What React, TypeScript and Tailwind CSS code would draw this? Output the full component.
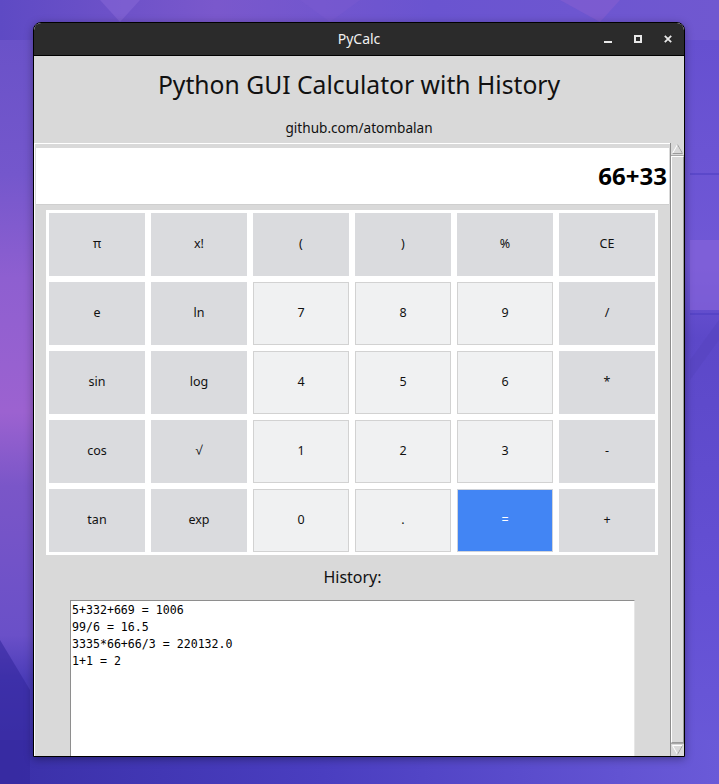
import React from "react";

const Wallpaper = () => (
  <svg className="absolute inset-0" width="719" height="784" viewBox="0 0 719 784">
    <defs>
      <linearGradient id="lg" x1="0" y1="0" x2="0" y2="1">
        <stop offset="0" stopColor="#6a52c8" />
        <stop offset="0.18" stopColor="#7457cc" />
        <stop offset="0.32" stopColor="#8e5fd0" />
        <stop offset="0.5" stopColor="#9c62d0" />
        <stop offset="0.6" stopColor="#7a56c8" />
        <stop offset="0.8" stopColor="#6a50c8" />
        <stop offset="0.86" stopColor="#4a3cb8" />
        <stop offset="1" stopColor="#3a30a8" />
      </linearGradient>
      <linearGradient id="rg" x1="0" y1="0" x2="0" y2="1">
        <stop offset="0" stopColor="#6650d0" />
        <stop offset="0.3" stopColor="#7058d6" />
        <stop offset="0.4" stopColor="#5c48c8" />
        <stop offset="0.75" stopColor="#6450d4" />
        <stop offset="1" stopColor="#6a5ad8" />
      </linearGradient>
      <linearGradient id="bg" x1="0" y1="0" x2="1" y2="0">
        <stop offset="0" stopColor="#3a30a8" />
        <stop offset="0.45" stopColor="#4a3ec0" />
        <stop offset="1" stopColor="#6a5ad8" />
      </linearGradient>
      <linearGradient id="tg" x1="0" y1="0" x2="1" y2="0">
        <stop offset="0" stopColor="#5e4ac4" />
        <stop offset="0.3" stopColor="#7a58cc" />
        <stop offset="0.6" stopColor="#6a54d0" />
        <stop offset="1" stopColor="#7058d0" />
      </linearGradient>
    </defs>
    <rect x="0" y="0" width="719" height="784" fill="url(#tg)" />
    <rect x="0" y="40" width="60" height="744" fill="url(#lg)" />
    <rect x="660" y="40" width="59" height="744" fill="url(#rg)" />
    <rect x="0" y="740" width="719" height="44" fill="url(#bg)" />
    <polygon points="690,240 719,240 719,310 690,310" fill="#8462d8" opacity="0.7" />
    <polygon points="690,360 719,320 719,340 690,380" fill="#5644c0" opacity="0.6" />
    <line x1="690" y1="174" x2="719" y2="174" stroke="#4a3cc0" strokeWidth="1" />
    <line x1="690" y1="314" x2="719" y2="314" stroke="#4a3cc0" strokeWidth="1" />
    <polygon points="0,640 30,690 30,784 0,784" fill="#35289e" opacity="0.6" />
    <polygon points="100,0 140,0 120,22" fill="#8a6ad8" opacity="0.5" />
    <polygon points="300,0 360,0 330,22" fill="#7a5ad0" opacity="0.5" />
    <polygon points="560,0 620,0 600,22" fill="#8a60d0" opacity="0.5" />
  </svg>
);

const TitleBar = () => (
  <div className="relative h-[33px] bg-[#2b2b2b] border-b border-black flex items-center justify-center rounded-t-[7px]">
    <span className="text-[14px] text-[#f0f0f0] leading-none" style={{ fontFamily: '"Noto Sans", sans-serif' }}>
      PyCalc
    </span>
    <div className="absolute right-[12px] top-0 h-full flex items-center gap-[22px]">
      <svg width="8" height="8" viewBox="0 0 8 8">
        <rect x="0" y="6" width="8" height="2" fill="#e8e8e8" />
      </svg>
      <svg width="8" height="8" viewBox="0 0 8 8">
        <rect x="1" y="1" width="6" height="6" fill="none" stroke="#e8e8e8" strokeWidth="2" />
      </svg>
      <svg width="8" height="8" viewBox="0 0 8 8">
        <path d="M0.8 0.8 L7.2 7.2 M7.2 0.8 L0.8 7.2" stroke="#e8e8e8" strokeWidth="1.8" />
      </svg>
    </div>
  </div>
);

type Btn = { label: string; kind: "fn" | "num" | "eq" };

const rows: Btn[][] = [
  [
    { label: "π", kind: "fn" },
    { label: "x!", kind: "fn" },
    { label: "(", kind: "fn" },
    { label: ")", kind: "fn" },
    { label: "%", kind: "fn" },
    { label: "CE", kind: "fn" },
  ],
  [
    { label: "e", kind: "fn" },
    { label: "ln", kind: "fn" },
    { label: "7", kind: "num" },
    { label: "8", kind: "num" },
    { label: "9", kind: "num" },
    { label: "/", kind: "fn" },
  ],
  [
    { label: "sin", kind: "fn" },
    { label: "log", kind: "fn" },
    { label: "4", kind: "num" },
    { label: "5", kind: "num" },
    { label: "6", kind: "num" },
    { label: "*", kind: "fn" },
  ],
  [
    { label: "cos", kind: "fn" },
    { label: "√", kind: "fn" },
    { label: "1", kind: "num" },
    { label: "2", kind: "num" },
    { label: "3", kind: "num" },
    { label: "-", kind: "fn" },
  ],
  [
    { label: "tan", kind: "fn" },
    { label: "exp", kind: "fn" },
    { label: "0", kind: "num" },
    { label: ".", kind: "num" },
    { label: "=", kind: "eq" },
    { label: "+", kind: "fn" },
  ],
];

const btnClass: Record<Btn["kind"], string> = {
  fn: "bg-[#dadbde] border border-[#dadbde] text-[#111]",
  num: "bg-[#f0f1f2] border border-[#d2d2d2] text-[#111]",
  eq: "bg-[#4285f4] border border-[#cfd3da] text-white",
};

const Scrollbar = () => (
  <div className="w-[14px] flex flex-col bg-[#d9d9d9] border-l border-[#8c8c8c]">
    <div className="h-[13px] flex items-center justify-center border-b border-[#a8a8a8]">
      <svg width="11" height="10" viewBox="0 0 11 10">
        <polygon points="5.5,0.5 10.5,9.5 0.5,9.5" fill="#d9d9d9" stroke="#ffffff" strokeWidth="1" />
        <line x1="10.5" y1="9.5" x2="0.5" y2="9.5" stroke="#9a9a9a" />
        <line x1="5.5" y1="0.5" x2="10.5" y2="9.5" stroke="#9a9a9a" />
      </svg>
    </div>
    <div className="flex-1 border-l border-t border-white border-r-[1px] border-r-[#9a9a9a] border-b border-b-[#9a9a9a] bg-[#d9d9d9]" />
    <div className="h-[13px] flex items-center justify-center border-t border-[#a8a8a8]">
      <svg width="11" height="10" viewBox="0 0 11 10">
        <polygon points="0.5,0.5 10.5,0.5 5.5,9.5" fill="#d9d9d9" stroke="#ffffff" strokeWidth="1" />
        <line x1="10.5" y1="0.5" x2="5.5" y2="9.5" stroke="#9a9a9a" />
      </svg>
    </div>
  </div>
);

export default function App() {
  const sans = { fontFamily: '"Noto Sans", "Open Sans", sans-serif' };
  return (
    <div className="relative w-[719px] h-[784px] overflow-hidden bg-[#6a52c8]">
      <Wallpaper />
      <div className="relative pt-[22px] pl-[33px]">
        <div className="w-[652px] h-[735px] border border-black rounded-t-[8px] flex flex-col overflow-hidden bg-[#d9d9d9] shadow-[0_2px_8px_rgba(0,0,0,0.35)]">
          <TitleBar />
          <div className="flex-1 flex flex-col min-h-0 bg-[#d9d9d9]" style={sans}>
            <div className="h-[87px] flex flex-col items-center">
              <div className="mt-[12px] h-[34px] flex items-center text-[24.7px] text-[#111] leading-none">
                Python GUI Calculator with History
              </div>
              <div className="mt-[17px] h-[18px] flex items-center text-[13.6px] text-[#111] leading-none">
                github.com/atombalan
              </div>
            </div>
            <div className="flex-1 flex min-h-0">
              <div className="flex-1 min-w-0 overflow-hidden border-t border-l border-white">
                <div className="pt-[4px] pl-[1px] pr-[1px]">
                  <div className="h-[57px] bg-white border-b border-[#cfcfcf] flex items-center justify-end pr-[2px]">
                    <span className="text-[24px] font-bold text-black leading-none">66+33</span>
                  </div>
                </div>
                <div className="mt-[5px] ml-[11px] w-[612px] bg-white p-[3px] grid grid-cols-6 gap-[6px]">
                  {rows.flat().map((b, i) => (
                    <div
                      key={i}
                      className={`h-[63px] flex items-center justify-center text-[12.5px] leading-none ${btnClass[b.kind]}`}
                    >
                      {b.label}
                    </div>
                  ))}
                </div>
                <div className="mt-[11px] h-[22px] flex items-center justify-center text-[16px] text-[#111] leading-none">
                  History:
                </div>
                <div className="mt-[12px] ml-[35px] w-[565px] h-[220px] bg-white border-t border-l border-[#8e8e8e] border-r border-r-[#e6e6e6] pl-[1px] pt-[1px]">
                  <div
                    className="text-[11.6px] leading-[17px] text-black whitespace-pre"
                    style={{ fontFamily: '"DejaVu Sans Mono", monospace' }}
                  >
                    {"5+332+669 = 1006\n99/6 = 16.5\n3335*66+66/3 = 220132.0\n1+1 = 2"}
                  </div>
                </div>
              </div>
              <Scrollbar />
            </div>
          </div>
        </div>
      </div>
    </div>
  );
}
